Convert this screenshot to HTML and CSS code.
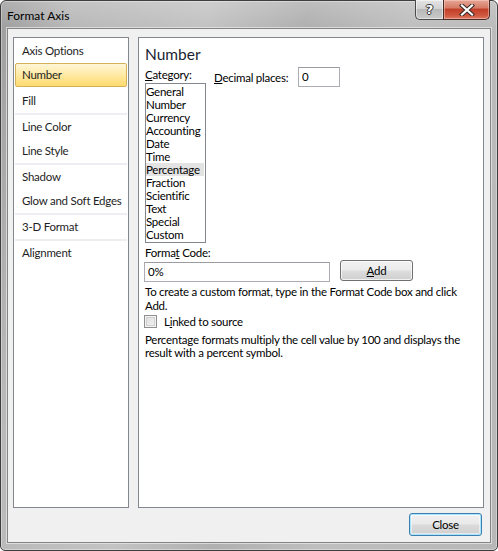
FILE: index.html
```html
<!DOCTYPE html>
<html>
<head>
<meta charset="utf-8">
<link rel="stylesheet" href="styles.css">
</head>
<body>
<div class="window">
  <div class="titlebar">
    <span class="title">Format Axis</span>
    <div class="caption">
      <div class="cap-help"><span class="help-glyph">?</span></div>
      <div class="cap-close">
        <svg width="16" height="12" viewBox="0 0 16 12">
          <path d="M3 1.5 L13 10.5 M13 1.5 L3 10.5" stroke="#3a2a28" stroke-width="4.2" stroke-linecap="square" fill="none"/>
          <path d="M3 1.5 L13 10.5 M13 1.5 L3 10.5" stroke="#ffffff" stroke-width="2.2" stroke-linecap="square" fill="none"/>
        </svg>
      </div>
    </div>
  </div>
  <div class="client">
    <div class="panes">
      <div class="nav">
        <div class="nav-item">Axis Options</div>
        <div class="nav-item selected">Number</div>
        <div class="nav-gap"></div>
        <div class="nav-item">Fill</div>
        <div class="nav-sep"></div>
        <div class="nav-item">Line Color</div>
        <div class="nav-item">Line Style</div>
        <div class="nav-sep"></div>
        <div class="nav-item">Shadow</div>
        <div class="nav-item">Glow and Soft Edges</div>
        <div class="nav-sep"></div>
        <div class="nav-item">3-D Format</div>
        <div class="nav-sep"></div>
        <div class="nav-item">Alignment</div>
      </div>
      <div class="content">
        <div class="heading">Number</div>
        <div class="row1">
          <div class="catcol">
            <div class="label"><u>C</u>ategory:</div>
            <div class="listbox">
              <div class="li">General</div>
              <div class="li">Number</div>
              <div class="li">Currency</div>
              <div class="li">Accounting</div>
              <div class="li">Date</div>
              <div class="li">Time</div>
              <div class="li active">Percentage</div>
              <div class="li">Fraction</div>
              <div class="li">Scientific</div>
              <div class="li">Text</div>
              <div class="li">Special</div>
              <div class="li">Custom</div>
            </div>
          </div>
          <div class="decimal">
            <span class="dec-label"><u>D</u>ecimal places:</span>
            <div class="textbox small">0</div>
          </div>
        </div>
        <div class="label code-label">Forma<u>t</u> Code:</div>
        <div class="coderow">
          <div class="textbox code">0%</div>
          <div class="btn add"><u>A</u>dd</div>
        </div>
        <p class="para1">To create a custom format, type in the Format Code box and click Add.</p>
        <div class="checkrow">
          <span class="checkbox"></span>
          <span class="check-label">L<u>i</u>nked to source</span>
        </div>
        <p class="para2">Percentage formats multiply the cell value by 100 and displays the result with a percent symbol.</p>
      </div>
    </div>
    <div class="footer">
      <div class="btn close">Close</div>
    </div>
  </div>
</div>
</body>
</html>
```

FILE: styles.css
```css
* { box-sizing: border-box; }

body {
  margin: 0;
  width: 498px;
  height: 551px;
  overflow: hidden;
  font-family: Lato, "Liberation Sans", sans-serif;
  font-size: 11.5px;
  letter-spacing: -0.25px;
  color: #000;
  background: #fff;
}

.window {
  width: 498px;
  height: 551px;
  border: 1px solid #3e3e3e;
  border-radius: 6px 6px 5px 5px;
  padding: 0 6px 7px 6px;
  display: flex;
  flex-direction: column;
  background:
    linear-gradient(180deg, rgba(255,255,255,0.18) 0px, rgba(255,255,255,0) 26px),
    linear-gradient(100deg, #9e9e9e 0%, #b8b8b8 12%, #c3c3c3 35%, #b0b0b0 52%, #bfbfbf 70%, #b7b7b7 100%);
  box-shadow: inset 0 0 0 1px rgba(255,255,255,0.35);
}

.titlebar {
  height: 27px;
  display: flex;
  justify-content: space-between;
  align-items: flex-start;
}

.title {
  font-size: 12px;
  letter-spacing: 0;
  line-height: 14px;
  margin-top: 8px;
  color: #000;
}

.caption {
  display: flex;
  margin-top: -1px;
  margin-right: 1px;
}

.cap-help {
  width: 28px;
  height: 20px;
  border: 1px solid #4a4a4a;
  border-top: none;
  border-right: none;
  border-radius: 0 0 0 5px;
  background: linear-gradient(180deg, #e4e4e4 0%, #d2d2d2 45%, #b9b9b9 50%, #c9c9c9 100%);
  display: flex;
  align-items: center;
  justify-content: center;
  box-shadow: inset 0 0 0 1px rgba(255,255,255,0.5);
}

.help-glyph {
  font-family: "DejaVu Sans", sans-serif;
  font-weight: bold;
  font-size: 13px;
  letter-spacing: 0;
  line-height: 14px;
  color: #fff;
  text-shadow: 1px 0 0 #333, -1px 0 0 #333, 0 1px 0 #333, 0 -1px 0 #333;
}

.cap-close {
  width: 47px;
  height: 20px;
  border: 1px solid #4a2a24;
  border-top: none;
  border-radius: 0 0 5px 0;
  background: linear-gradient(180deg, #e6a696 0%, #d77d68 40%, #c2402a 50%, #d0553e 80%, #dc7a62 100%);
  display: flex;
  align-items: center;
  justify-content: center;
  box-shadow: inset 0 0 0 1px rgba(255,220,210,0.45);
}

.client {
  height: 515px;
  border: 1px solid #848484;
  box-shadow: 0 0 0 1px rgba(235,235,235,0.7);
  background: #f0f0f0;
  padding: 8px 6px 6px 5px;
  display: flex;
  flex-direction: column;
}

.panes {
  height: 471px;
  display: flex;
  gap: 9px;
}

.nav {
  width: 116px;
  border: 1px solid #828790;
  background: #fff;
  padding: 1px 0 0 0;
  display: flex;
  flex-direction: column;
}

.nav-item {
  height: 24px;
  line-height: 24px;
  padding-left: 7px;
  margin: 0 1px 0 1px;
  color: #1e1e1e;
  white-space: nowrap;
}

.nav-item.selected {
  border: 1px solid #d4b25a;
  border-radius: 2px;
  padding-left: 6px;
  line-height: 22px;
  background: linear-gradient(180deg, #fff6d8 0%, #ffe9a3 50%, #ffdb6e 100%);
}

.nav-gap { height: 2px; }

.nav-sep {
  height: 2px;
  margin: 0 1px;
  background: #eceef1;
}

.content {
  width: 346px;
  border: 1px solid #828790;
  background: #fff;
  padding: 6px 6px 0 6px;
}

.heading {
  font-size: 15.5px;
  letter-spacing: 0;
  line-height: 20px;
  color: #1a1f33;
}

.row1 {
  display: flex;
  gap: 8px;
  margin-top: 4px;
}

.catcol { width: 61px; }

.label { line-height: 13px; }

.listbox {
  margin-top: 2px;
  width: 61px;
  height: 160px;
  border: 1px solid #828790;
  padding: 1px 1px 1px 0;
}

.li {
  line-height: 13px;
  height: 13px;
  padding-left: 0;
  white-space: nowrap;
}

.li.active { background: #e3e3e3; }

.decimal {
  display: flex;
  align-items: center;
  height: 20px;
  margin-top: -1px;
}

.dec-label {
  width: 84px;
  line-height: 13px;
}

.textbox {
  height: 20px;
  border: 1px solid #abadb3;
  border-top-color: #9a9ca2;
  background: #fff;
  line-height: 18px;
  padding-left: 3px;
}

.textbox.small { width: 42px; }

.code-label { margin-top: 3px; }

.coderow {
  display: flex;
  align-items: flex-start;
  margin-top: 3px;
}

.textbox.code {
  width: 186px;
  margin-left: -1px;
}

.btn {
  border: 1px solid #707070;
  border-radius: 3px;
  background: linear-gradient(180deg, #f2f2f2 0%, #ebebeb 48%, #dddddd 52%, #cfcfcf 100%);
  box-shadow: inset 0 0 0 1px rgba(255,255,255,0.7);
  text-align: center;
  color: #000;
}

.btn.add {
  width: 73px;
  height: 21px;
  line-height: 19px;
  margin-left: 10px;
  margin-top: -2px;
}

.para1 {
  margin: 3px 0 0 0;
  line-height: 14px;
}

.checkrow {
  display: flex;
  align-items: center;
  margin-top: 2px;
  height: 13px;
}

.checkbox {
  width: 13px;
  height: 13px;
  margin-left: -1px;
  border: 1px solid #8e8f8f;
  background: linear-gradient(135deg, #dcdcdc 0%, #f4f4f4 100%);
  box-shadow: inset 0 0 0 1px #f4f4f4, inset 0 0 0 2px #d0d0d0;
}

.check-label {
  margin-left: 7px;
  line-height: 13px;
}

.para2 {
  margin: 5px -5px 0 0;
  line-height: 13px;
}

.footer {
  display: flex;
  justify-content: flex-end;
  margin-top: 5px;
  padding-right: 2px;
}

.btn.close {
  width: 73px;
  height: 23px;
  line-height: 21px;
  border-color: #3c7fb1;
  box-shadow: inset 0 0 0 1px #a8e4fb, inset 0 0 0 2px rgba(255,255,255,0.5);
  background: linear-gradient(180deg, #f1f1f1 0%, #e9e9e9 48%, #dbdbdb 52%, #cfcfcf 100%);
}
```
